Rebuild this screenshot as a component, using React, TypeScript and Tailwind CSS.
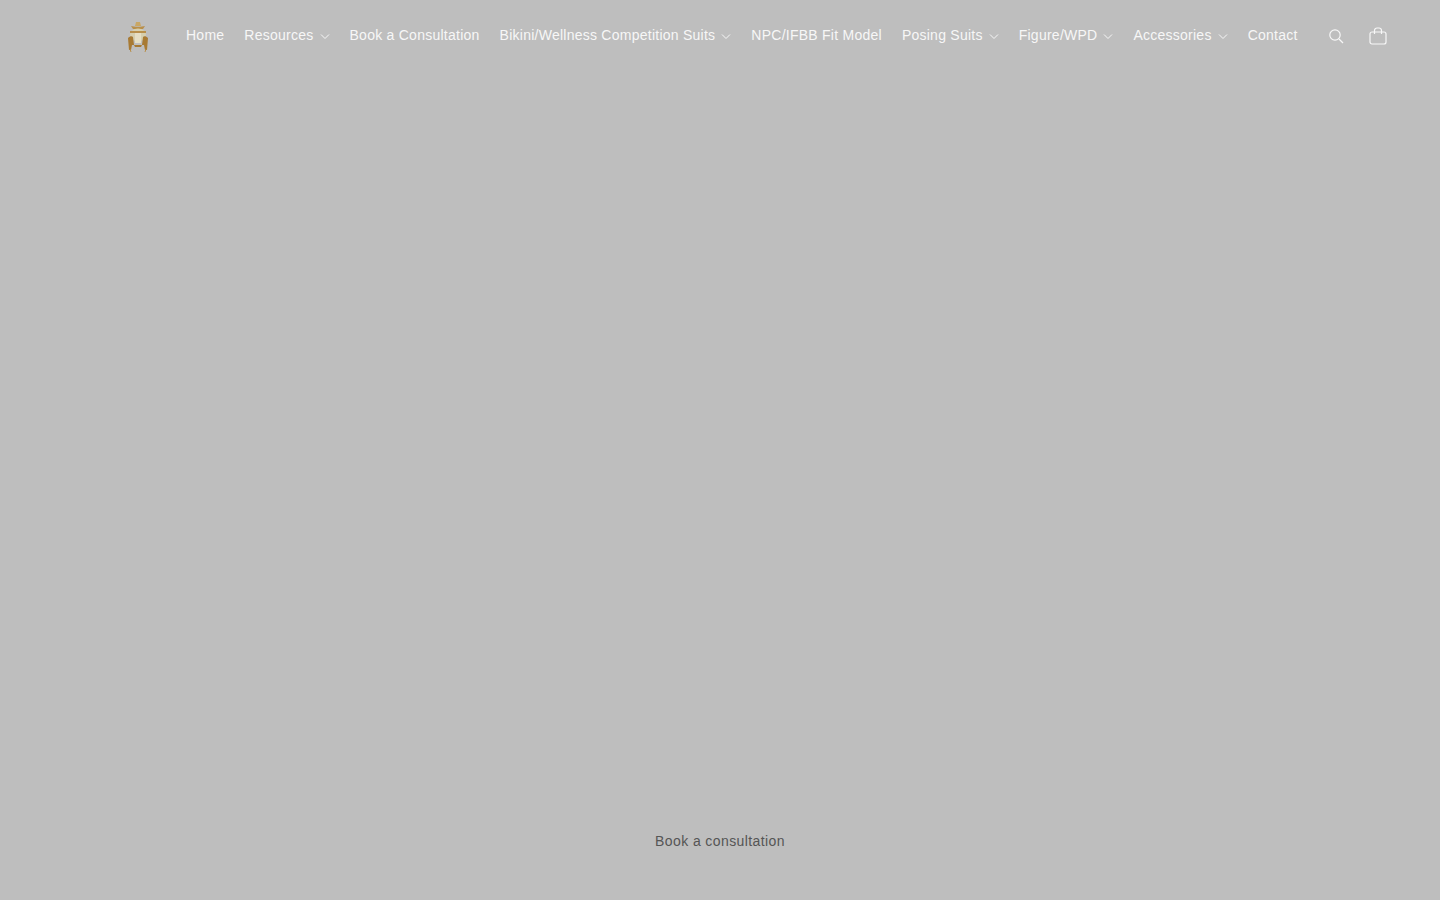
const font = { fontFamily: '"Liberation Sans", Arial, sans-serif' };

const navItems = [
  { label: "Home" },
  { label: "Resources", caret: true },
  { label: "Book a Consultation" },
  { label: "Bikini/Wellness Competition Suits", caret: true },
  { label: "NPC/IFBB Fit Model" },
  { label: "Posing Suits", caret: true },
  { label: "Figure/WPD", caret: true },
  { label: "Accessories", caret: true },
  { label: "Contact" },
];

const Caret = () => (
  <svg className="w-[10px] h-[10px] ml-[6px] mt-[2px]" viewBox="0 0 10 10" fill="none" stroke="currentColor" strokeWidth="1">
    <path d="M1 3.5 5 7.5 9 3.5" />
  </svg>
);

const Logo = () => (
  <svg width="24" height="32" viewBox="0 0 24 32" fill="none" className="mt-[4px] blur-[0.5px]">
    <path d="M5 5c3 1 11 1 14 0l-2 3H7z" fill="#b98f4a" />
    <path d="M10 1h4l1 4H9z" fill="#c9a765" />
    <ellipse cx="12" cy="14" rx="8" ry="6.5" fill="#d6cfae" />
    <path d="M4 10h16v2H4z" fill="#b98f4a" />
    <path d="M2 17c2-2 4-2 5-1l1 8H6l-1 5H3z" fill="#a87a33" />
    <path d="M22 17c-2-2-4-2-5-1l-1 8h2l1 5h2z" fill="#a87a33" />
    <path d="M9 12h6v10H9z" fill="#e6dfc4" />
    <path d="M8 24h8l-1 2H9z" fill="#a87a33" />
    <path d="M4 28l1 3M20 28l-1 3" stroke="#b98f4a" strokeWidth="1" />
  </svg>
);

export default function App() {
  return (
    <div style={font} className="w-full h-[900px] bg-[#bebebe] flex flex-col overflow-hidden">
      <header className="h-[70px] flex items-center pl-[126px] pr-[53px]">
        <Logo />
        <nav className="flex items-center gap-[20px] ml-[36px] text-[14px] tracking-[0.25px] text-[#f7f7f7]">
          {navItems.map((item) => (
            <a key={item.label} className="flex items-center whitespace-nowrap">
              {item.label}
              {item.caret && <Caret />}
            </a>
          ))}
        </nav>
        <div className="ml-auto flex items-center gap-[24px] mt-[1px] text-[#f7f7f7]">
          <svg width="18" height="18" viewBox="0 0 18 18" fill="none" stroke="currentColor" strokeWidth="1.2">
            <circle cx="8" cy="8" r="5.2" />
            <path d="M12 12l4 4" />
          </svg>
          <svg width="18" height="18" viewBox="0 0 18 18" fill="none" stroke="currentColor" strokeWidth="1.2">
            <rect x="1" y="5" width="16" height="12" rx="2" />
            <path d="M5.5 7V3.5a2.5 2.5 0 0 1 2.5-2.5h2a2.5 2.5 0 0 1 2.5 2.5V7" />
          </svg>
        </div>
      </header>
      <main className="flex-1 flex items-end justify-center pb-[48px]">
        <span className="text-[14px] tracking-[0.4px] text-[#555555]">Book a consultation</span>
      </main>
    </div>
  );
}
